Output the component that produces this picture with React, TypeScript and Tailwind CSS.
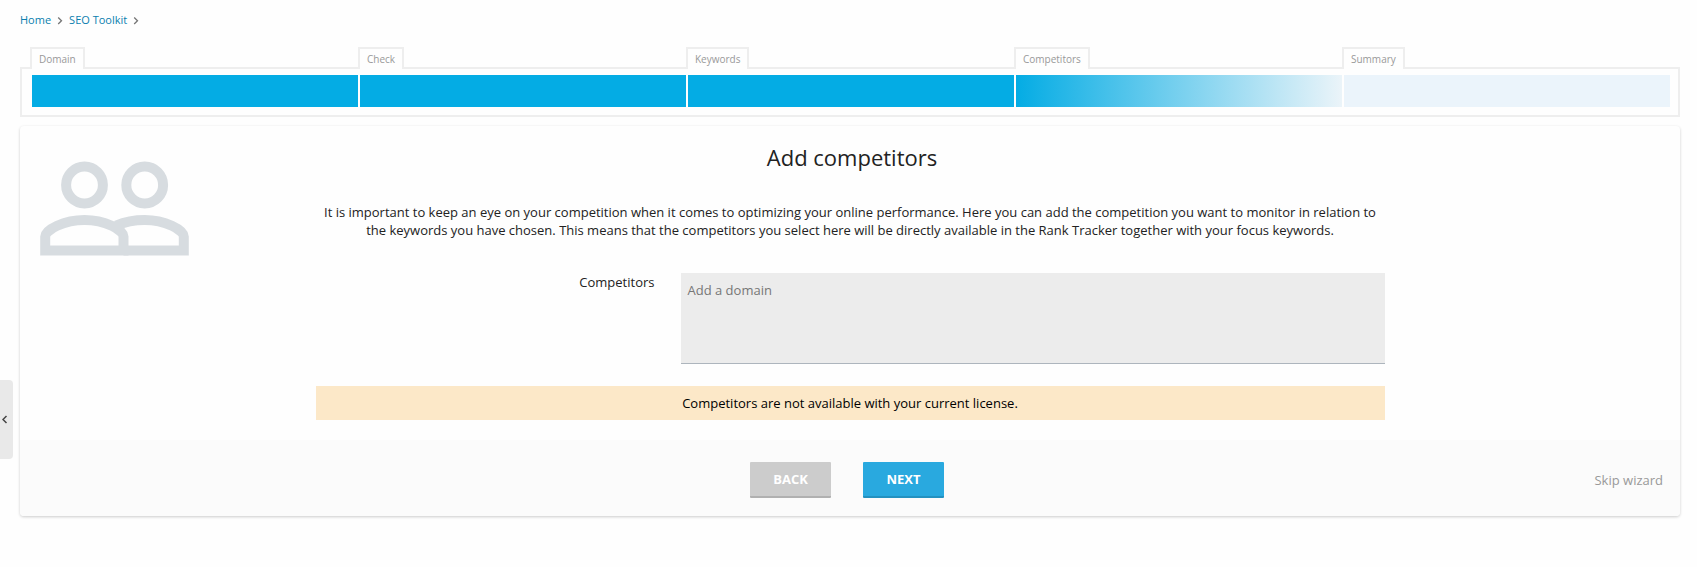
import React from "react";

type StepState = "done" | "current" | "todo";

const steps: { name: string; state: StepState }[] = [
  { name: "Domain", state: "done" },
  { name: "Check", state: "done" },
  { name: "Keywords", state: "done" },
  { name: "Competitors", state: "current" },
  { name: "Summary", state: "todo" },
];

const barStyles: Record<StepState, string> = {
  done: "bg-[#04ace4]",
  current: "bg-linear-to-r/srgb from-[#04ace4] to-[#ebf4f9]",
  todo: "bg-[#ebf4fb]",
};

function Crumb({ label }: { label: string }) {
  return (
    <li className="flex items-center">
      <a href="#" className="text-[#0a7fae]">
        {label}
      </a>
      <svg className="mx-1.5 h-[9px] w-[6px]" viewBox="0 0 6 9" fill="none" stroke="#777" aria-hidden="true">
        <path d="M1.2 1.5 4.5 4.7 1.2 8" strokeWidth="1.3" />
      </svg>
    </li>
  );
}

function Progress() {
  return (
    <ol className="mt-[39px] flex border-2 border-[#eeeeee] px-2 pb-2">
      {steps.map((step) => (
        <li key={step.name} className="-mt-[22px] min-w-0 flex-1">
          <div className="flex">
            <span className="h-[22px] border-2 border-b-0 border-[#eeeeee] bg-[#fefefe] px-[7px] text-[10px] leading-5 text-[#999999]">
              {step.name}
            </span>
          </div>
          <div className={`mt-1.5 ml-0.5 h-8 ${barStyles[step.state]}`} />
        </li>
      ))}
    </ol>
  );
}

function PeopleIcon() {
  return (
    <svg className="h-[95px] w-[149px]" viewBox="0 0 149 95" fill="none" stroke="#d7dce0" strokeWidth="10" aria-hidden="true">
      <circle cx="44.5" cy="24" r="18.4" />
      <circle cx="104.7" cy="24" r="18.4" />
      <path d="M5.2 89.6V75.5C5.2 69 24 59 44.5 59S83.5 69 83.5 75.5V89.6Z" />
      <path d="M76 64.5C84.5 61 93.5 59 104.7 59C125 59 143.8 69 143.8 75.5V89.6H83.5" />
    </svg>
  );
}

export default function App() {
  return (
    <div className="flex min-h-screen flex-col bg-[#fefefe] font-['Open_Sans',sans-serif] text-[13px] leading-[18px] text-[#222222]">
      <button
        type="button"
        aria-label="Collapse sidebar"
        className="fixed top-[380px] left-0 flex h-[79px] w-[13px] items-center rounded-r bg-[#e9e9e9] pl-0.5"
      >
        <svg className="h-[9px] w-[6px]" viewBox="0 0 6 9" fill="none" stroke="#444" aria-hidden="true">
          <path d="M4.5 1 1 4.5 4.5 8" strokeWidth="1.5" />
        </svg>
      </button>

      <main className="flex flex-col pt-3 pr-[17px] pb-4 pl-5">
        <nav aria-label="Breadcrumb">
          <ol className="flex text-[11px] leading-4">
            <Crumb label="Home" />
            <Crumb label="SEO Toolkit" />
          </ol>
        </nav>

        <Progress />

        <section className="mt-[9px] rounded bg-[#fefefe] shadow-[0_1px_3px_rgba(0,0,0,0.2)]">
          <div className="grid grid-cols-[1fr_minmax(0,1069px)_1fr] pb-5">
            <div className="pt-[35px] pl-5">
              <PeopleIcon />
            </div>
            <div>
              <h1 className="pt-[15px] pl-1 text-center text-[22px] leading-8">Add competitors</h1>
              <p className="px-1 pt-[30px] text-center">
                It is important to keep an eye on your competition when it comes to optimizing your online performance.
                Here you can add the competition you want to monitor in relation to the keywords you have chosen. This
                means that the competitors you select here will be directly available in the Rank Tracker together with
                your focus keywords.
              </p>
              <div className="mt-[34px] grid grid-cols-[339fr_704fr] gap-[26px]">
                <label htmlFor="competitors" className="text-right">
                  Competitors
                </label>
                <textarea
                  id="competitors"
                  placeholder="Add a domain"
                  className="block h-[91px] w-full resize-none border-b border-[#adb5bd] bg-[#ececec] px-[7px] py-2 placeholder:text-[#777777]"
                />
              </div>
              <p role="alert" className="mt-[22px] bg-[#fce8c8] py-2 text-center text-black">
                Competitors are not available with your current license.
              </p>
            </div>
          </div>

          <footer className="grid grid-cols-[1fr_auto_1fr] items-center rounded-b bg-[#fbfbfb] pt-[22px] pb-[18px]">
            <div className="col-start-2 mr-1.5 flex gap-8">
              <button
                type="button"
                className="h-9 w-[81px] rounded-[1px] border-b-2 border-[#b0b0b0] bg-[#cccccc] font-bold text-white"
              >
                BACK
              </button>
              <button
                type="button"
                className="h-9 w-[81px] rounded-[1px] border-b-2 border-[#2391c0] bg-[#29a9df] font-bold text-white"
              >
                NEXT
              </button>
            </div>
            <a href="#" className="mr-[17px] justify-self-end text-[#999999]">
              Skip wizard
            </a>
          </footer>
        </section>
      </main>
    </div>
  );
}
